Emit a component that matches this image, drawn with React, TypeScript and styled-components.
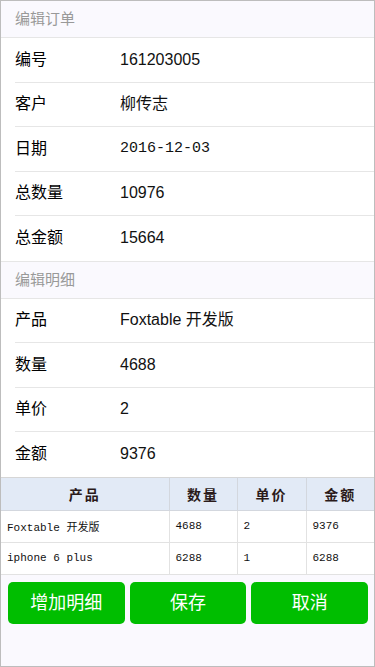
import React from 'react'
import styled, { createGlobalStyle } from 'styled-components'

const GlobalStyle = createGlobalStyle`
  html, body {
    margin: 0;
    padding: 0;
    background: #faf9fe;
  }
  * {
    box-sizing: border-box;
  }
`

const Page = styled.div`
  width: 375px;
  height: 667px;
  border: 1px solid #bdbdbd;
  background: #faf9fe;
  font-family: 'Liberation Sans', 'Noto Sans CJK SC', sans-serif;
  overflow: hidden;
`

const SectionTitle = styled.div`
  height: 37px;
  padding: 0 14px 2px;
  display: flex;
  align-items: center;
  font-size: 15px;
  line-height: 18px;
  color: #999;
  background: #faf9fe;
  border-bottom: 1px solid #e6e6e6;
  font-family: 'Noto Sans CJK SC', sans-serif;
`

const FieldList = styled.div<{ $last?: boolean }>`
  background: #fff;
  padding-left: 14px;
  border-bottom: ${({ $last }) => ($last ? 'none' : '1px solid #e6e6e6')};
`

const Field = styled.div`
  height: 44.5px;
  display: flex;
  align-items: center;
  border-bottom: 1px solid #e6e6e6;

  &:last-child {
    border-bottom: none;
  }
`

const Label = styled.div`
  width: 105px;
  font-size: 16px;
  line-height: 18px;
  margin-bottom: 4px;
  color: #000;
  font-family: 'Noto Sans CJK SC', sans-serif;
`

const Value = styled.div<{ $mono?: boolean }>`
  font-size: ${({ $mono }) => ($mono ? '15px' : '16px')};
  line-height: 18px;
  color: #111;
  font-family: ${({ $mono }) =>
    $mono
      ? "'Liberation Mono', monospace"
      : "'Liberation Sans', 'Noto Sans CJK SC', sans-serif"};
`

const Table = styled.table`
  width: 100%;
  border-collapse: collapse;
  table-layout: fixed;
  background: #fff;
  border-top: 1px solid #d6d6d6;
`

const Th = styled.th`
  height: 33px;
  background: #e2eaf6;
  border: 1px solid #d3d7de;
  border-top: none;
  font-size: 14px;
  font-weight: bold;
  color: #2a1a1a;
  text-align: center;
  font-family: 'Noto Sans CJK SC', sans-serif;
  letter-spacing: 2px;

  &:first-child {
    border-left: none;
  }
  &:last-child {
    border-right: none;
  }
`

const Td = styled.td`
  height: 32px;
  border: 1px solid #e2e2e2;
  padding: 0 6px;
  font-size: 11px;
  color: #111;
  font-family: 'Liberation Mono', 'Noto Sans CJK SC', monospace;
  white-space: nowrap;

  &:first-child {
    border-left: none;
  }
  &:last-child {
    border-right: none;
  }
`

const Buttons = styled.div`
  display: grid;
  grid-template-columns: repeat(3, 1fr);
  gap: 5px;
  padding: 7px 6px 0 7px;
`

const Button = styled.button`
  height: 42px;
  border: none;
  border-radius: 5px;
  background: #00be00;
  color: #fff;
  font-size: 18px;
  font-family: 'Noto Sans CJK SC', sans-serif;
  padding: 0 0 3px;
`

const orderFields = [
  { label: '编号', value: '161203005' },
  { label: '客户', value: '柳传志' },
  { label: '日期', value: '2016-12-03', mono: true },
  { label: '总数量', value: '10976' },
  { label: '总金额', value: '15664' },
]

const detailFields = [
  { label: '产品', value: 'Foxtable 开发版' },
  { label: '数量', value: '4688' },
  { label: '单价', value: '2' },
  { label: '金额', value: '9376' },
]

const rows = [
  ['Foxtable 开发版', '4688', '2', '9376'],
  ['iphone 6 plus', '6288', '1', '6288'],
]

export default function App() {
  return (
    <Page>
      <GlobalStyle />
      <SectionTitle>编辑订单</SectionTitle>
      <FieldList>
        {orderFields.map((f) => (
          <Field key={f.label}>
            <Label>{f.label}</Label>
            <Value $mono={f.mono}>{f.value}</Value>
          </Field>
        ))}
      </FieldList>
      <SectionTitle>编辑明细</SectionTitle>
      <FieldList $last>
        {detailFields.map((f) => (
          <Field key={f.label}>
            <Label>{f.label}</Label>
            <Value>{f.value}</Value>
          </Field>
        ))}
      </FieldList>
      <Table>
        <colgroup>
          <col style={{ width: 168 }} />
          <col style={{ width: 68 }} />
          <col style={{ width: 69 }} />
          <col />
        </colgroup>
        <thead>
          <tr>
            <Th>产品</Th>
            <Th>数量</Th>
            <Th>单价</Th>
            <Th>金额</Th>
          </tr>
        </thead>
        <tbody>
          {rows.map((r) => (
            <tr key={r[0]}>
              {r.map((c, i) => (
                <Td key={i}>{c}</Td>
              ))}
            </tr>
          ))}
        </tbody>
      </Table>
      <Buttons>
        <Button>增加明细</Button>
        <Button>保存</Button>
        <Button>取消</Button>
      </Buttons>
    </Page>
  )
}
